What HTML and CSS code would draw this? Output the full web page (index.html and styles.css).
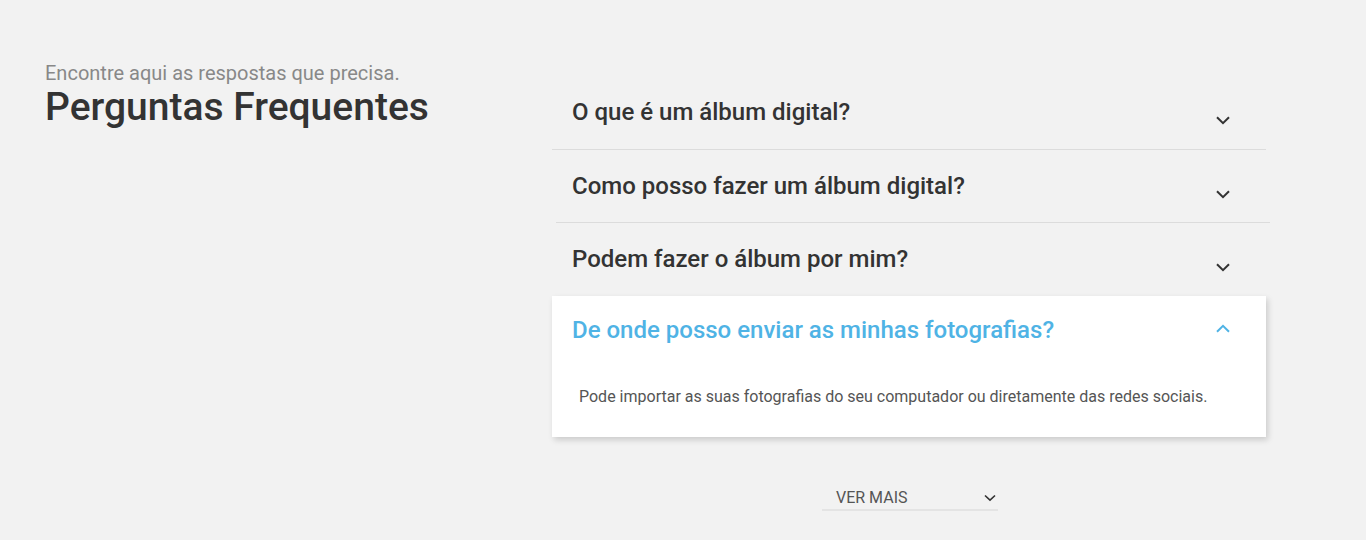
FILE: index.html
```html
<!DOCTYPE html>
<html lang="pt">
<head>
<meta charset="utf-8">
<title>Perguntas Frequentes</title>
<link rel="stylesheet" href="styles.css">
</head>
<body>
<section class="faq">
  <div class="faq-intro">
    <p class="faq-sub">Encontre aqui as respostas que precisa.</p>
    <h1 class="faq-title">Perguntas Frequentes</h1>
  </div>
  <div class="faq-main">
    <ul class="accordion">
      <li class="acc-item">
        <div class="acc-head">
          <span class="acc-q">O que é um álbum digital?</span>
          <svg class="chev" viewBox="0 0 14 9" width="14" height="9"><path d="M1 1.2 L7 7.2 L13 1.2" fill="none" stroke="currentColor" stroke-width="2"/></svg>
        </div>
      </li>
      <li class="acc-item shifted">
        <div class="acc-head">
          <span class="acc-q">Como posso fazer um álbum digital?</span>
          <svg class="chev" viewBox="0 0 14 9" width="14" height="9"><path d="M1 1.2 L7 7.2 L13 1.2" fill="none" stroke="currentColor" stroke-width="2"/></svg>
        </div>
      </li>
      <li class="acc-item">
        <div class="acc-head">
          <span class="acc-q">Podem fazer o álbum por mim?</span>
          <svg class="chev" viewBox="0 0 14 9" width="14" height="9"><path d="M1 1.2 L7 7.2 L13 1.2" fill="none" stroke="currentColor" stroke-width="2"/></svg>
        </div>
      </li>
      <li class="acc-item open">
        <div class="acc-head">
          <span class="acc-q">De onde posso enviar as minhas fotografias?</span>
          <svg class="chev" viewBox="0 0 14 9" width="14" height="9"><path d="M1 7.8 L7 1.8 L13 7.8" fill="none" stroke="currentColor" stroke-width="2"/></svg>
        </div>
        <p class="acc-a">Pode importar as suas fotografias do seu computador ou diretamente das redes sociais.</p>
      </li>
    </ul>
    <div class="more-wrap">
      <button class="more" type="button">
        <span>VER MAIS</span>
        <svg class="chev-sm" viewBox="0 0 12 8" width="12" height="8"><path d="M1 1.5 L6 6.2 L11 1.5" fill="none" stroke="currentColor" stroke-width="1.6"/></svg>
      </button>
    </div>
  </div>
</section>
</body>
</html>
```

FILE: styles.css
```css
html, body {
  margin: 0;
  padding: 0;
  background: #f2f2f2;
  font-family: Roboto, "Noto Sans", Arial, sans-serif;
  color: #333;
}

.faq {
  display: flex;
  height: 540px;
  box-sizing: border-box;
  padding: 63px 0 0 45px;
}

.faq-intro {
  width: 507px;
  flex: none;
}

.faq-sub {
  margin: 0;
  font-size: 20px;
  line-height: 20px;
  color: #888;
}

.faq-title {
  margin: 2px 0 0;
  font-size: 39px;
  line-height: 44px;
  font-weight: 500;
  color: #333;
}

.faq-main {
  width: 714px;
  flex: none;
  padding-top: 13px;
}

.accordion {
  list-style: none;
  margin: 0;
  padding: 0;
}

.acc-item {
  border-bottom: 1px solid #dcdcdc;
}

.acc-item.shifted {
  margin-left: 4px;
  margin-right: -4px;
}

.acc-item:nth-child(3) {
  border-bottom: none;
}

.acc-head {
  height: 72px;
  display: flex;
  align-items: center;
  justify-content: space-between;
  padding: 0 36px 0 20px;
}

.acc-item:first-child .acc-head {
  height: 73px;
}

.acc-item.shifted .acc-head {
  padding-left: 16px;
  padding-right: 40px;
}

.acc-q {
  font-size: 24px;
  font-weight: 500;
  line-height: 28px;
  color: #333;
  margin-top: -1px;
}

.chev {
  color: #333;
  margin-top: 16px;
}

.acc-item.open {
  background: #fff;
  border-bottom: none;
  margin-top: 1px;
  box-shadow: 2px 3px 6px rgba(0, 0, 0, 0.16);
}

.acc-item.open .acc-head {
  height: 68px;
}

.acc-item.open .acc-q {
  color: #4fb3e5;
}

.acc-item.open .chev {
  color: #4fb3e5;
  margin-top: -4px;
}

.acc-a {
  margin: 0;
  padding: 23px 20px 30px 27px;
  font-size: 16px;
  line-height: 20px;
  color: #555;
}

.more-wrap {
  display: flex;
  padding: 51px 0 0 270px;
}

.more {
  width: 176px;
  display: flex;
  align-items: center;
  justify-content: space-between;
  padding: 0 1px 1px 14px;
  border: none;
  border-bottom: 2px solid #e4e4e4;
  background: transparent;
  font-family: Roboto, "Noto Sans", Arial, sans-serif;
  font-size: 16px;
  line-height: 20px;
  color: #555;
  cursor: pointer;
}

.chev-sm {
  color: #333;
  margin-right: 1px;
}
```
